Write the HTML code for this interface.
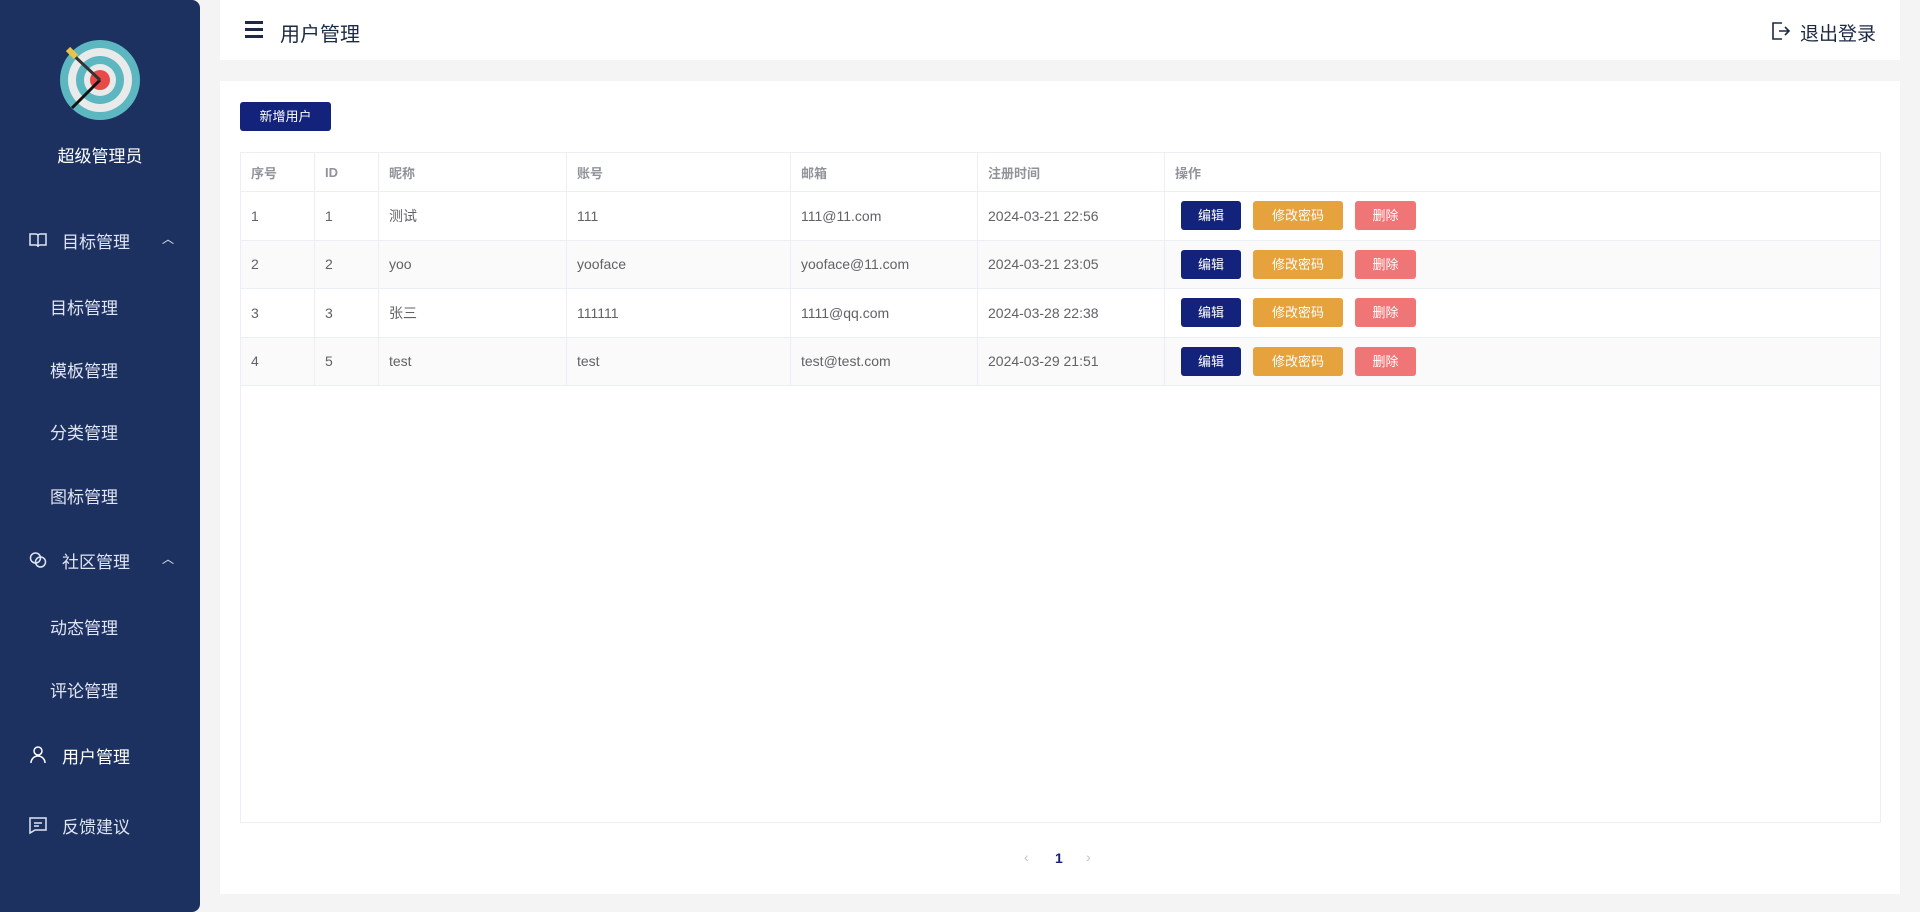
<!DOCTYPE html>
<html><head><meta charset="utf-8"><style>
*{margin:0;padding:0;box-sizing:border-box}
body{width:1920px;height:912px;background:#f4f4f5;font-family:"Liberation Sans","Noto Sans CJK SC",sans-serif;position:relative;overflow:hidden;color:#606266}
.side{position:absolute;left:0;top:0;width:200px;height:912px;background:#1d3160;border-radius:0 8px 8px 0;color:#fff}
.mi{position:absolute;left:0;width:200px;font-size:17px;color:#dfe5f2}
.mi .t{position:absolute;left:62px;top:-12px}
.mi svg{position:absolute;left:28px;top:-10px}
.mi .c{position:absolute;left:162px;top:-10px;font-size:12px}
.sub{position:absolute;left:50px;font-size:17px;color:#dfe5f2;transform:translateY(-12px)}
.head{position:absolute;left:220px;top:0;width:1680px;height:60px;background:#fff}
.card{position:absolute;left:220px;top:81px;width:1680px;height:813px;background:#fff}
.btn{position:absolute;color:#fff;font-size:13px;text-align:center;border-radius:3px}
table{position:absolute;left:240px;top:152px;width:1641px;border-collapse:collapse;font-size:14px}
td,th{border:1px solid #ebeef5;height:48.5px;padding-left:10px;text-align:left;color:#606266;font-weight:normal}
th{height:39px;color:#909399;font-size:13px;font-weight:bold}
tr.s td{background:#fafafa}
.tb{position:absolute;left:240px;top:152px;width:1641px;height:671px;border:1px solid #ebeef5}
.b{display:inline-block;height:29px;line-height:29px;color:#fff;font-size:13px;text-align:center;border-radius:3px;margin-right:12px;vertical-align:middle}
</style></head><body>
<div class="side">
<svg style="position:absolute;left:60px;top:40px" width="80" height="80" viewBox="0 0 80 80">
<circle cx="40" cy="40" r="40" fill="#5cb7c0"/><circle cx="40" cy="40" r="32" fill="#e9eaea"/><circle cx="40" cy="40" r="24" fill="#5cb7c0"/><circle cx="40" cy="40" r="16" fill="#e9eaea"/><circle cx="40" cy="40" r="10" fill="#e84a4a"/>
<line x1="40" y1="40" x2="12" y2="68" stroke="#111" stroke-width="3"/><line x1="40" y1="40" x2="10" y2="12" stroke="#333" stroke-width="3"/><line x1="16" y1="17" x2="8" y2="9" stroke="#e8c448" stroke-width="6"/>
</svg>
<div style="position:absolute;top:142px;width:200px;text-align:center;font-size:17px">超级管理员</div>
<div class="mi" style="top:240px"><svg width="20" height="20" viewBox="0 0 20 20" fill="none" stroke="#dfe5f2" stroke-width="1.5"><path d="M2 4h6a2 2 0 0 1 2 2v11a2 2 0 0 0-2-2H2zM18 4h-6a2 2 0 0 0-2 2v11a2 2 0 0 1 2-2h6z"/></svg><span class="t">目标管理</span><span class="c">︿</span></div>
<div class="sub" style="top:306px">目标管理</div>
<div class="sub" style="top:369px">模板管理</div>
<div class="sub" style="top:431px">分类管理</div>
<div class="sub" style="top:495px">图标管理</div>
<div class="mi" style="top:560px"><svg width="20" height="20" viewBox="0 0 20 20" fill="none" stroke="#dfe5f2" stroke-width="1.5"><circle cx="7.5" cy="8" r="5"/><circle cx="12.5" cy="12" r="5"/></svg><span class="t">社区管理</span><span class="c">︿</span></div>
<div class="sub" style="top:626px">动态管理</div>
<div class="sub" style="top:689px">评论管理</div>
<div class="mi" style="top:755px;color:#fff"><svg width="20" height="20" viewBox="0 0 20 20" fill="none" stroke="#fff" stroke-width="1.5"><circle cx="10" cy="6" r="4"/><path d="M3 18a7 7 0 0 1 14 0"/></svg><span class="t" style="color:#fff">用户管理</span></div>
<div class="mi" style="top:825px"><svg width="20" height="20" viewBox="0 0 20 20" fill="none" stroke="#dfe5f2" stroke-width="1.5"><path d="M2 3h16v12H7l-5 3z"/><path d="M6 8h8M6 11h5"/></svg><span class="t">反馈建议</span></div>
</div>
<div class="head">
<div style="position:absolute;left:25px;top:21px;width:18px"><div style="height:2.5px;background:#1d2a44;margin-bottom:4.5px"></div><div style="height:2.5px;background:#1d2a44;margin-bottom:4.5px"></div><div style="height:2.5px;background:#1d2a44"></div></div>
<div style="position:absolute;left:60px;top:18px;font-size:20px;color:#1d2a44">用户管理</div>
<svg style="position:absolute;left:1551px;top:21px" width="20" height="20" viewBox="0 0 20 20" fill="none" stroke="#1d2a44" stroke-width="1.6"><path d="M11 2H2v16h9M8 10h10M14 6l4 4-4 4"/></svg>
<div style="position:absolute;left:1580px;top:19px;font-size:19px;color:#1d2a44">退出登录</div>
</div>
<div class="card"></div>
<div class="btn" style="left:240px;top:102px;width:91px;height:29px;line-height:29px;background:#13227a">新增用户</div>
<div class="tb"></div>
<table>
<tr><th style="width:74px">序号</th><th style="width:64px">ID</th><th style="width:188px">昵称</th><th style="width:224px">账号</th><th style="width:187px">邮箱</th><th style="width:187px">注册时间</th><th>操作</th></tr>
<tr><td>1</td><td>1</td><td>测试</td><td>111</td><td>111@11.com</td><td>2024-03-21 22:56</td><td><span class="b" style="width:60px;margin-left:6px;background:#13227a">编辑</span><span class="b" style="width:90px;background:#e6a23c">修改密码</span><span class="b" style="width:61px;background:#f07576">删除</span></td></tr>
<tr class="s"><td>2</td><td>2</td><td>yoo</td><td>yooface</td><td>yooface@11.com</td><td>2024-03-21 23:05</td><td><span class="b" style="width:60px;margin-left:6px;background:#13227a">编辑</span><span class="b" style="width:90px;background:#e6a23c">修改密码</span><span class="b" style="width:61px;background:#f07576">删除</span></td></tr>
<tr><td>3</td><td>3</td><td>张三</td><td>111111</td><td>1111@qq.com</td><td>2024-03-28 22:38</td><td><span class="b" style="width:60px;margin-left:6px;background:#13227a">编辑</span><span class="b" style="width:90px;background:#e6a23c">修改密码</span><span class="b" style="width:61px;background:#f07576">删除</span></td></tr>
<tr class="s"><td>4</td><td>5</td><td>test</td><td>test</td><td>test@test.com</td><td>2024-03-29 21:51</td><td><span class="b" style="width:60px;margin-left:6px;background:#13227a">编辑</span><span class="b" style="width:90px;background:#e6a23c">修改密码</span><span class="b" style="width:61px;background:#f07576">删除</span></td></tr>
</table>
<div style="position:absolute;left:1024px;top:849px;font-size:14px;color:#c0c4cc">‹</div>
<div style="position:absolute;left:1055px;top:850px;font-size:14px;font-weight:bold;color:#13227a">1</div>
<div style="position:absolute;left:1086px;top:849px;font-size:14px;color:#c0c4cc">›</div>
</body></html>
